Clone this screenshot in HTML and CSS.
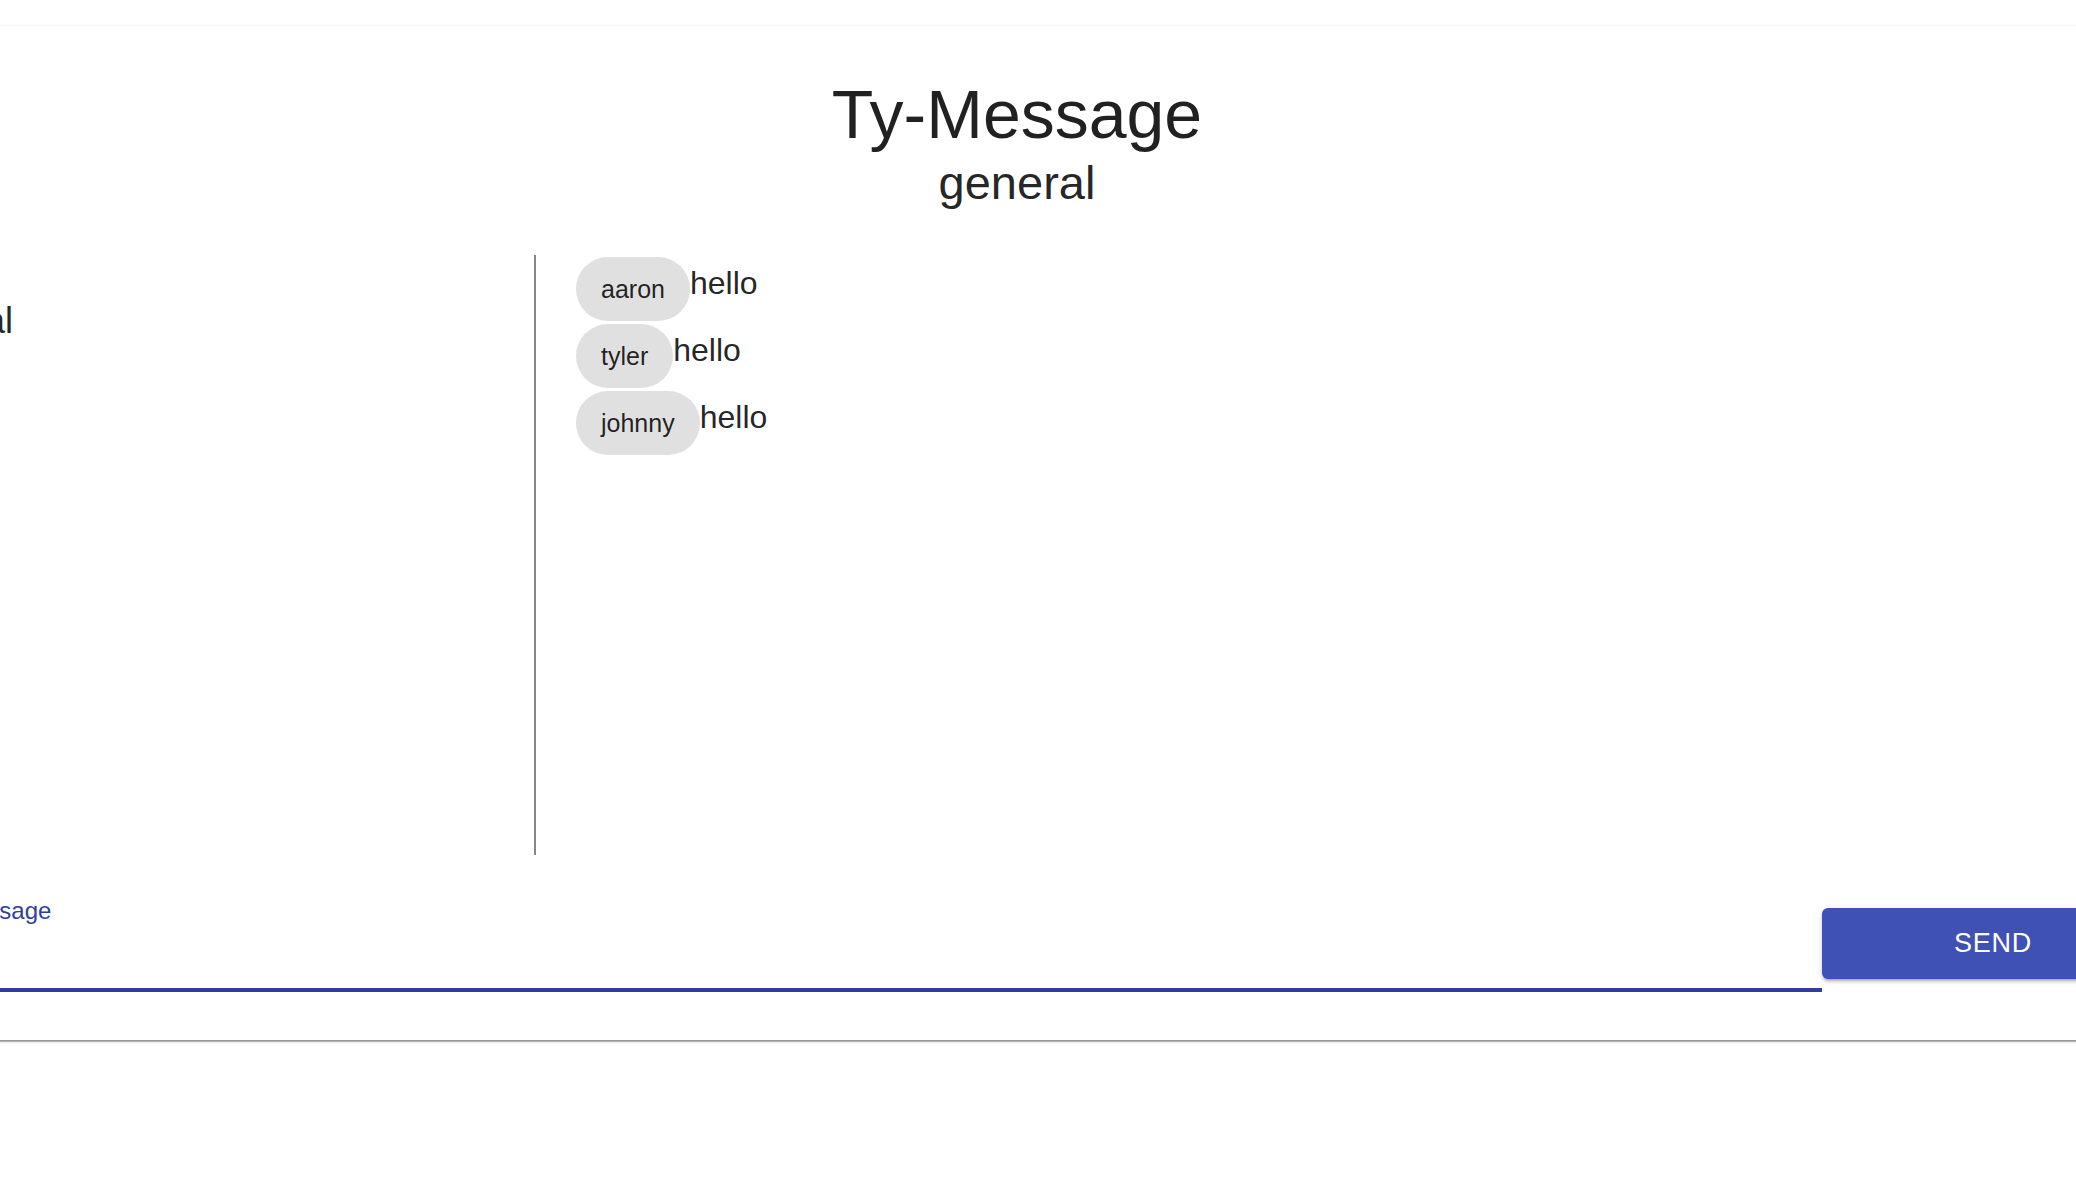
FILE: index.html
```html
<!DOCTYPE html>
<html lang="en">
<head>
<meta charset="utf-8">
<title>Ty-Message</title>
<link rel="stylesheet" href="styles.css">
</head>
<body>
<div class="paper">
  <header class="header">
    <h1 class="title">Ty-Message</h1>
    <h2 class="subtitle">general</h2>
  </header>
  <div class="content">
    <aside class="channels">
      <div class="channel">general</div>
    </aside>
    <main class="chat">
      <div class="msg"><span class="chip">aaron</span><span class="text">hello</span></div>
      <div class="msg"><span class="chip">tyler</span><span class="text">hello</span></div>
      <div class="msg"><span class="chip">johnny</span><span class="text">hello</span></div>
    </main>
  </div>
  <div class="composer">
    <div class="field">
      <label class="label">Message</label>
    </div>
    <button class="send">Send</button>
  </div>
</div>
</body>
</html>
```

FILE: styles.css
```css
html, body {
  margin: 0;
  padding: 0;
  overflow: hidden;
  background: #ffffff;
  width: 2076px;
  height: 1204px;
}

body {
  font-family: "Liberation Sans", Arial, Helvetica, sans-serif;
  color: rgba(0, 0, 0, 0.87);
}

.paper {
  width: 2334px;
  height: 1014px;
  margin-left: -150px;
  margin-top: 26px;
  background: #fff;
  box-sizing: border-box;
  box-shadow: 0 3px 1px -1px rgba(0,0,0,0.24), 0 1px 1px 0 rgba(0,0,0,0.16), 0 1px 4px 0 rgba(0,0,0,0.12);
  display: flex;
  flex-direction: column;
}

.header {
  padding-top: 48px;
  text-align: center;
}

.title {
  margin: 0;
  font-weight: 400;
  font-size: 68px;
  line-height: 81px;
}

.subtitle {
  margin: 0;
  font-weight: 400;
  font-size: 47px;
  line-height: 56px;
}

.content {
  margin-top: 44px;
  height: 600px;
  display: flex;
}

.channels {
  width: 686px;
  flex: none;
  border-right: 2px solid #878787;
  padding-top: 45px;
  padding-left: 43px;
  box-sizing: border-box;
}

.channel {
  font-size: 36px;
  line-height: 42px;
}

.chat {
  flex: 1;
  padding-left: 40px;
  padding-top: 2px;
  display: flex;
  flex-direction: column;
  align-items: flex-start;
}

.msg {
  display: flex;
  align-items: flex-start;
  margin-bottom: 3px;
}

.chip {
  display: inline-flex;
  align-items: center;
  height: 64px;
  padding: 0 25px;
  border-radius: 32px;
  background: #e0e0e0;
  font-size: 25px;
  color: rgba(0, 0, 0, 0.87);
}

.text {
  font-size: 32px;
  margin-top: 8px;
}

.composer {
  margin-top: 25px;
  display: flex;
  align-items: flex-start;
  padding-left: 104px;
  padding-right: 20px;
}

.field {
  flex: 1;
  height: 112px;
  border-bottom: 4px solid #303f9f;
  box-sizing: border-box;
  padding-top: 17px;
}

.label {
  display: block;
  font-size: 24px;
  line-height: 28px;
  color: #303f9f;
}

.send {
  margin-top: 28px;
  width: 342px;
  height: 71px;
  border: none;
  border-radius: 6px;
  background: #3f51b5;
  color: #fff;
  font-family: "Liberation Sans", Arial, Helvetica, sans-serif;
  font-size: 27px;
  letter-spacing: 0.8px;
  text-transform: uppercase;
  box-shadow: 0 4px 2px -3px rgba(0,0,0,0.2), 0 3px 3px 0 rgba(0,0,0,0.14), 0 1px 7px 0 rgba(0,0,0,0.12);
  flex: none;
  cursor: pointer;
}
```
